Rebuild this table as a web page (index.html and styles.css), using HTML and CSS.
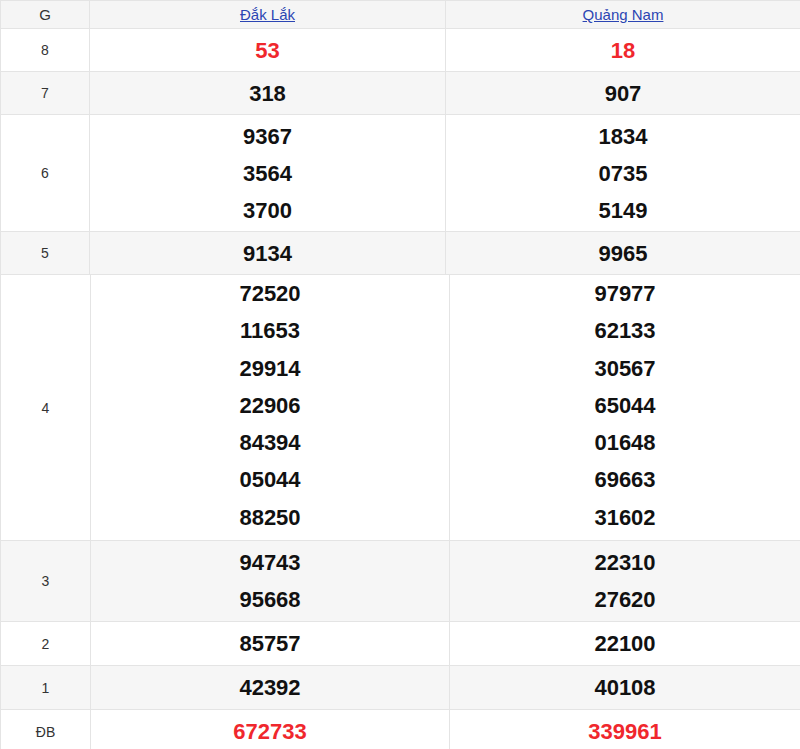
FILE: index.html
```html
<!DOCTYPE html>
<html lang="vi">
<head>
<meta charset="utf-8">
<title>Kết quả xổ số</title>
<link rel="stylesheet" href="styles.css">
</head>
<body>
<table class="kq kq-top">
  <colgroup>
    <col class="c-g">
    <col class="c-p1">
    <col class="c-p2">
  </colgroup>
  <thead>
    <tr class="hd">
      <th>G</th>
      <th><a href="#">Đắk Lắk</a></th>
      <th><a href="#">Quảng Nam</a></th>
    </tr>
  </thead>
  <tbody>
    <tr>
      <td class="lb">8</td>
      <td class="num red">53</td>
      <td class="num red">18</td>
    </tr>
    <tr class="alt">
      <td class="lb">7</td>
      <td class="num">318</td>
      <td class="num">907</td>
    </tr>
    <tr>
      <td class="lb">6</td>
      <td class="num"><div>9367</div><div>3564</div><div>3700</div></td>
      <td class="num"><div>1834</div><div>0735</div><div>5149</div></td>
    </tr>
    <tr class="alt">
      <td class="lb">5</td>
      <td class="num">9134</td>
      <td class="num">9965</td>
    </tr>
  </tbody>
</table>
<table class="kq kq-bottom">
  <colgroup>
    <col class="c-g2">
    <col class="c-p3">
    <col class="c-p4">
  </colgroup>
  <tbody>
    <tr class="g4">
      <td class="lb">4</td>
      <td class="num"><div>72520</div><div>11653</div><div>29914</div><div>22906</div><div>84394</div><div>05044</div><div>88250</div></td>
      <td class="num"><div>97977</div><div>62133</div><div>30567</div><div>65044</div><div>01648</div><div>69663</div><div>31602</div></td>
    </tr>
    <tr class="alt">
      <td class="lb">3</td>
      <td class="num"><div>94743</div><div>95668</div></td>
      <td class="num"><div>22310</div><div>27620</div></td>
    </tr>
    <tr>
      <td class="lb">2</td>
      <td class="num">85757</td>
      <td class="num">22100</td>
    </tr>
    <tr class="alt">
      <td class="lb">1</td>
      <td class="num">42392</td>
      <td class="num">40108</td>
    </tr>
    <tr>
      <td class="lb">ĐB</td>
      <td class="num red">672733</td>
      <td class="num red">339961</td>
    </tr>
  </tbody>
</table>
</body>
</html>
```

FILE: styles.css
```css
html, body {
  margin: 0;
  padding: 0;
  background: #fff;
}

body {
  font-family: "Liberation Sans", Arial, sans-serif;
  color: #222;
}

.kq {
  width: 800px;
  border-collapse: collapse;
  table-layout: fixed;
}

.c-g { width: 89px; }
.c-p1 { width: 356px; }
.c-p2 { width: 355px; }

.c-g2 { width: 90px; }
.c-p3 { width: 359px; }
.c-p4 { width: 351px; }

.kq th,
.kq td {
  border: 1px solid #e4e4e4;
  text-align: center;
  vertical-align: middle;
}

.kq-bottom {
  margin-top: -1px;
}

.hd th {
  background: #f5f5f5;
  font-weight: normal;
  font-size: 15px;
  line-height: 17px;
  padding: 5px 0 5px;
  color: #333;
}

.hd a {
  color: #2b45b3;
  text-decoration: underline;
}

.alt td {
  background: #f6f6f6;
}

.lb {
  font-size: 14px;
  color: #333;
}

.num {
  font-size: 22px;
  font-weight: bold;
  line-height: 37px;
  padding: 3px 0 2px;
  color: #111;
}

.kq-bottom .num {
  padding: 3px 0 3px;
}

.kq-bottom .g4 .num {
  line-height: 37.3px;
  padding: 0 0 4px;
}

.red {
  color: #f0272d;
}
```
